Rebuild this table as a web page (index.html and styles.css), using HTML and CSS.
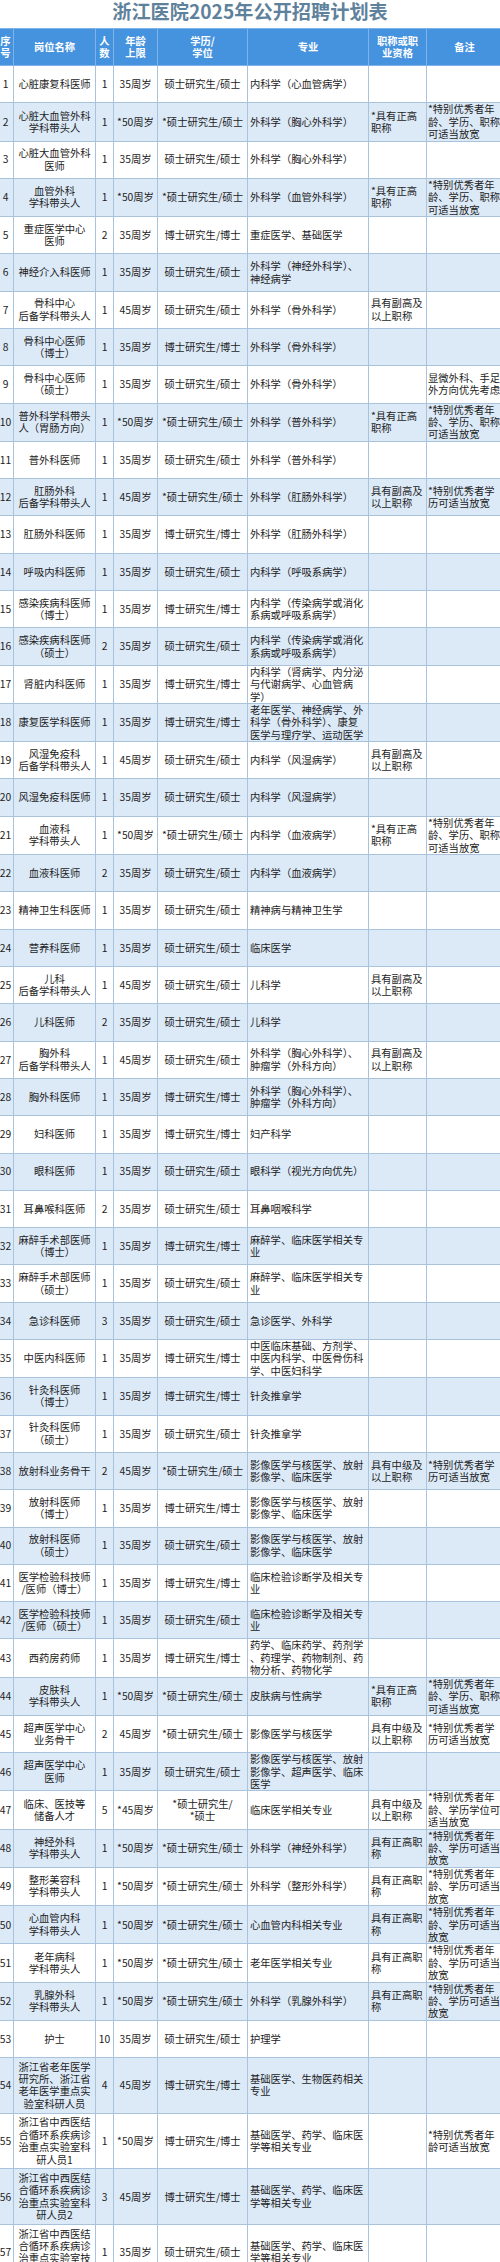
FILE: index.html
```html
<!DOCTYPE html>
<html lang="zh-CN">
<head>
<meta charset="utf-8">
<title>浙江医院2025年公开招聘计划表</title>
<link rel="stylesheet" href="styles.css">
</head>
<body>
<div class="page">
  <h1 class="title">浙江医院2025年公开招聘计划表</h1>
  <div class="wrap">
    <table class="plan">
      <colgroup>
        <col class="c-no"><col class="c-name"><col class="c-num"><col class="c-age"><col class="c-edu"><col class="c-major"><col class="c-title"><col class="c-note">
      </colgroup>
      <thead>
        <tr>
          <th>序<br>号</th><th>岗位名称</th><th>人<br>数</th><th>年龄<br>上限</th><th>学历/<br>学位</th><th>专业</th><th>职称或职<br>业资格</th><th>备注</th>
        </tr>
      </thead>
      <tbody>
        <tr><td>1</td><td>心脏康复科医师</td><td>1</td><td>35周岁</td><td>硕士研究生/硕士</td><td class="l">内科学（心血管病学）</td><td class="l"></td><td class="n"></td></tr>
        <tr><td>2</td><td>心脏大血管外科<br>学科带头人</td><td>1</td><td>*50周岁</td><td>*硕士研究生/硕士</td><td class="l">外科学（胸心外科学）</td><td class="l">*具有正高<br>职称</td><td class="n">*特别优秀者年<br>龄、学历、职称<br>可适当放宽</td></tr>
        <tr><td>3</td><td>心脏大血管外科<br>医师</td><td>1</td><td>35周岁</td><td>硕士研究生/硕士</td><td class="l">外科学（胸心外科学）</td><td class="l"></td><td class="n"></td></tr>
        <tr><td>4</td><td>血管外科<br>学科带头人</td><td>1</td><td>*50周岁</td><td>*硕士研究生/硕士</td><td class="l">外科学（血管外科学）</td><td class="l">*具有正高<br>职称</td><td class="n">*特别优秀者年<br>龄、学历、职称<br>可适当放宽</td></tr>
        <tr><td>5</td><td>重症医学中心<br>医师</td><td>2</td><td>35周岁</td><td>博士研究生/博士</td><td class="l">重症医学、基础医学</td><td class="l"></td><td class="n"></td></tr>
        <tr><td>6</td><td>神经介入科医师</td><td>1</td><td>35周岁</td><td>硕士研究生/硕士</td><td class="l">外科学（神经外科学）、<br>神经病学</td><td class="l"></td><td class="n"></td></tr>
        <tr><td>7</td><td>骨科中心<br>后备学科带头人</td><td>1</td><td>45周岁</td><td>硕士研究生/硕士</td><td class="l">外科学（骨外科学）</td><td class="l">具有副高及<br>以上职称</td><td class="n"></td></tr>
        <tr><td>8</td><td>骨科中心医师<br>（博士）</td><td>1</td><td>35周岁</td><td>博士研究生/博士</td><td class="l">外科学（骨外科学）</td><td class="l"></td><td class="n"></td></tr>
        <tr><td>9</td><td>骨科中心医师<br>（硕士）</td><td>1</td><td>35周岁</td><td>硕士研究生/硕士</td><td class="l">外科学（骨外科学）</td><td class="l"></td><td class="n">显微外科、手足<br>外方向优先考虑</td></tr>
        <tr><td>10</td><td>普外科学科带头<br>人（胃肠方向）</td><td>1</td><td>*50周岁</td><td>*硕士研究生/硕士</td><td class="l">外科学（普外科学）</td><td class="l">*具有正高<br>职称</td><td class="n">*特别优秀者年<br>龄、学历、职称<br>可适当放宽</td></tr>
        <tr><td>11</td><td>普外科医师</td><td>1</td><td>35周岁</td><td>硕士研究生/硕士</td><td class="l">外科学（普外科学）</td><td class="l"></td><td class="n"></td></tr>
        <tr><td>12</td><td>肛肠外科<br>后备学科带头人</td><td>1</td><td>45周岁</td><td>*硕士研究生/硕士</td><td class="l">外科学（肛肠外科学）</td><td class="l">具有副高及<br>以上职称</td><td class="n">*特别优秀者学<br>历可适当放宽</td></tr>
        <tr><td>13</td><td>肛肠外科医师</td><td>1</td><td>35周岁</td><td>博士研究生/博士</td><td class="l">外科学（肛肠外科学）</td><td class="l"></td><td class="n"></td></tr>
        <tr><td>14</td><td>呼吸内科医师</td><td>1</td><td>35周岁</td><td>硕士研究生/硕士</td><td class="l">内科学（呼吸系病学）</td><td class="l"></td><td class="n"></td></tr>
        <tr><td>15</td><td>感染疾病科医师<br>（博士）</td><td>1</td><td>35周岁</td><td>博士研究生/博士</td><td class="l">内科学（传染病学或消化<br>系病或呼吸系病学）</td><td class="l"></td><td class="n"></td></tr>
        <tr><td>16</td><td>感染疾病科医师<br>（硕士）</td><td>2</td><td>35周岁</td><td>硕士研究生/硕士</td><td class="l">内科学（传染病学或消化<br>系病或呼吸系病学）</td><td class="l"></td><td class="n"></td></tr>
        <tr><td>17</td><td>肾脏内科医师</td><td>1</td><td>35周岁</td><td>博士研究生/博士</td><td class="l">内科学（肾病学、内分泌<br>与代谢病学、心血管病<br>学）</td><td class="l"></td><td class="n"></td></tr>
        <tr><td>18</td><td>康复医学科医师</td><td>1</td><td>35周岁</td><td>博士研究生/博士</td><td class="l">老年医学、神经病学、外<br>科学（骨外科学）、康复<br>医学与理疗学、运动医学</td><td class="l"></td><td class="n"></td></tr>
        <tr><td>19</td><td>风湿免疫科<br>后备学科带头人</td><td>1</td><td>45周岁</td><td>硕士研究生/硕士</td><td class="l">内科学（风湿病学）</td><td class="l">具有副高及<br>以上职称</td><td class="n"></td></tr>
        <tr><td>20</td><td>风湿免疫科医师</td><td>1</td><td>35周岁</td><td>硕士研究生/硕士</td><td class="l">内科学（风湿病学）</td><td class="l"></td><td class="n"></td></tr>
        <tr><td>21</td><td>血液科<br>学科带头人</td><td>1</td><td>*50周岁</td><td>*硕士研究生/硕士</td><td class="l">内科学（血液病学）</td><td class="l">*具有正高<br>职称</td><td class="n">*特别优秀者年<br>龄、学历、职称<br>可适当放宽</td></tr>
        <tr><td>22</td><td>血液科医师</td><td>2</td><td>35周岁</td><td>硕士研究生/硕士</td><td class="l">内科学（血液病学）</td><td class="l"></td><td class="n"></td></tr>
        <tr><td>23</td><td>精神卫生科医师</td><td>1</td><td>35周岁</td><td>硕士研究生/硕士</td><td class="l">精神病与精神卫生学</td><td class="l"></td><td class="n"></td></tr>
        <tr><td>24</td><td>营养科医师</td><td>1</td><td>35周岁</td><td>硕士研究生/硕士</td><td class="l">临床医学</td><td class="l"></td><td class="n"></td></tr>
        <tr><td>25</td><td>儿科<br>后备学科带头人</td><td>1</td><td>45周岁</td><td>硕士研究生/硕士</td><td class="l">儿科学</td><td class="l">具有副高及<br>以上职称</td><td class="n"></td></tr>
        <tr><td>26</td><td>儿科医师</td><td>2</td><td>35周岁</td><td>硕士研究生/硕士</td><td class="l">儿科学</td><td class="l"></td><td class="n"></td></tr>
        <tr><td>27</td><td>胸外科<br>后备学科带头人</td><td>1</td><td>45周岁</td><td>硕士研究生/硕士</td><td class="l">外科学（胸心外科学）、<br>肿瘤学（外科方向）</td><td class="l">具有副高及<br>以上职称</td><td class="n"></td></tr>
        <tr><td>28</td><td>胸外科医师</td><td>1</td><td>35周岁</td><td>博士研究生/博士</td><td class="l">外科学（胸心外科学）、<br>肿瘤学（外科方向）</td><td class="l"></td><td class="n"></td></tr>
        <tr><td>29</td><td>妇科医师</td><td>1</td><td>35周岁</td><td>博士研究生/博士</td><td class="l">妇产科学</td><td class="l"></td><td class="n"></td></tr>
        <tr><td>30</td><td>眼科医师</td><td>1</td><td>35周岁</td><td>硕士研究生/硕士</td><td class="l">眼科学（视光方向优先）</td><td class="l"></td><td class="n"></td></tr>
        <tr><td>31</td><td>耳鼻喉科医师</td><td>2</td><td>35周岁</td><td>硕士研究生/硕士</td><td class="l">耳鼻咽喉科学</td><td class="l"></td><td class="n"></td></tr>
        <tr><td>32</td><td>麻醉手术部医师<br>（博士）</td><td>1</td><td>35周岁</td><td>博士研究生/博士</td><td class="l">麻醉学、临床医学相关专<br>业</td><td class="l"></td><td class="n"></td></tr>
        <tr><td>33</td><td>麻醉手术部医师<br>（硕士）</td><td>1</td><td>35周岁</td><td>硕士研究生/硕士</td><td class="l">麻醉学、临床医学相关专<br>业</td><td class="l"></td><td class="n"></td></tr>
        <tr><td>34</td><td>急诊科医师</td><td>3</td><td>35周岁</td><td>硕士研究生/硕士</td><td class="l">急诊医学、外科学</td><td class="l"></td><td class="n"></td></tr>
        <tr><td>35</td><td>中医内科医师</td><td>1</td><td>35周岁</td><td>博士研究生/博士</td><td class="l">中医临床基础、方剂学、<br>中医内科学、中医骨伤科<br>学、中医妇科学</td><td class="l"></td><td class="n"></td></tr>
        <tr><td>36</td><td>针灸科医师<br>（博士）</td><td>1</td><td>35周岁</td><td>博士研究生/博士</td><td class="l">针灸推拿学</td><td class="l"></td><td class="n"></td></tr>
        <tr><td>37</td><td>针灸科医师<br>（硕士）</td><td>1</td><td>35周岁</td><td>硕士研究生/硕士</td><td class="l">针灸推拿学</td><td class="l"></td><td class="n"></td></tr>
        <tr><td>38</td><td>放射科业务骨干</td><td>2</td><td>45周岁</td><td>*硕士研究生/硕士</td><td class="l">影像医学与核医学、放射<br>影像学、临床医学</td><td class="l">具有中级及<br>以上职称</td><td class="n">*特别优秀者学<br>历可适当放宽</td></tr>
        <tr><td>39</td><td>放射科医师<br>（博士）</td><td>1</td><td>35周岁</td><td>博士研究生/博士</td><td class="l">影像医学与核医学、放射<br>影像学、临床医学</td><td class="l"></td><td class="n"></td></tr>
        <tr><td>40</td><td>放射科医师<br>（硕士）</td><td>1</td><td>35周岁</td><td>硕士研究生/硕士</td><td class="l">影像医学与核医学、放射<br>影像学、临床医学</td><td class="l"></td><td class="n"></td></tr>
        <tr><td>41</td><td>医学检验科技师<br>/医师（博士）</td><td>1</td><td>35周岁</td><td>博士研究生/博士</td><td class="l">临床检验诊断学及相关专<br>业</td><td class="l"></td><td class="n"></td></tr>
        <tr><td>42</td><td>医学检验科技师<br>/医师（硕士）</td><td>1</td><td>35周岁</td><td>硕士研究生/硕士</td><td class="l">临床检验诊断学及相关专<br>业</td><td class="l"></td><td class="n"></td></tr>
        <tr><td>43</td><td>西药房药师</td><td>1</td><td>35周岁</td><td>博士研究生/博士</td><td class="l">药学、临床药学、药剂学<br>、药理学、药物制剂、药<br>物分析、药物化学</td><td class="l"></td><td class="n"></td></tr>
        <tr><td>44</td><td>皮肤科<br>学科带头人</td><td>1</td><td>*50周岁</td><td>*硕士研究生/硕士</td><td class="l">皮肤病与性病学</td><td class="l">*具有正高<br>职称</td><td class="n">*特别优秀者年<br>龄、学历、职称<br>可适当放宽</td></tr>
        <tr><td>45</td><td>超声医学中心<br>业务骨干</td><td>2</td><td>45周岁</td><td>*硕士研究生/硕士</td><td class="l">影像医学与核医学</td><td class="l">具有中级及<br>以上职称</td><td class="n">*特别优秀者学<br>历可适当放宽</td></tr>
        <tr><td>46</td><td>超声医学中心<br>医师</td><td>1</td><td>35周岁</td><td>硕士研究生/硕士</td><td class="l">影像医学与核医学、放射<br>影像学、超声医学、临床<br>医学</td><td class="l"></td><td class="n"></td></tr>
        <tr><td>47</td><td>临床、医技等<br>储备人才</td><td>5</td><td>*45周岁</td><td>*硕士研究生/<br>*硕士</td><td class="l">临床医学相关专业</td><td class="l">具有中级及<br>以上职称</td><td class="n">*特别优秀者年<br>龄、学历学位可<br>适当放宽</td></tr>
        <tr><td>48</td><td>神经外科<br>学科带头人</td><td>1</td><td>*50周岁</td><td>*硕士研究生/硕士</td><td class="l">外科学（神经外科学）</td><td class="l">具有正高职<br>称</td><td class="n">*特别优秀者年<br>龄、学历可适当<br>放宽</td></tr>
        <tr><td>49</td><td>整形美容科<br>学科带头人</td><td>1</td><td>*50周岁</td><td>*硕士研究生/硕士</td><td class="l">外科学（整形外科学）</td><td class="l">具有正高职<br>称</td><td class="n">*特别优秀者年<br>龄、学历可适当<br>放宽</td></tr>
        <tr><td>50</td><td>心血管内科<br>学科带头人</td><td>1</td><td>*50周岁</td><td>*硕士研究生/硕士</td><td class="l">心血管内科相关专业</td><td class="l">具有正高职<br>称</td><td class="n">*特别优秀者年<br>龄、学历可适当<br>放宽</td></tr>
        <tr><td>51</td><td>老年病科<br>学科带头人</td><td>1</td><td>*50周岁</td><td>*硕士研究生/硕士</td><td class="l">老年医学相关专业</td><td class="l">具有正高职<br>称</td><td class="n">*特别优秀者年<br>龄、学历可适当<br>放宽</td></tr>
        <tr><td>52</td><td>乳腺外科<br>学科带头人</td><td>1</td><td>*50周岁</td><td>*硕士研究生/硕士</td><td class="l">外科学（乳腺外科学）</td><td class="l">具有正高职<br>称</td><td class="n">*特别优秀者年<br>龄、学历可适当<br>放宽</td></tr>
        <tr><td>53</td><td>护士</td><td>10</td><td>35周岁</td><td>硕士研究生/硕士</td><td class="l">护理学</td><td class="l"></td><td class="n"></td></tr>
        <tr class="tall"><td>54</td><td>浙江省老年医学<br>研究所、浙江省<br>老年医学重点实<br>验室科研人员</td><td>4</td><td>45周岁</td><td>博士研究生/博士</td><td class="l">基础医学、生物医药相关<br>专业</td><td class="l"></td><td class="n"></td></tr>
        <tr class="tall"><td>55</td><td>浙江省中西医结<br>合循环系疾病诊<br>治重点实验室科<br>研人员1</td><td>1</td><td>*50周岁</td><td>博士研究生/博士</td><td class="l">基础医学、药学、临床医<br>学等相关专业</td><td class="l"></td><td class="n">*特别优秀者年<br>龄可适当放宽</td></tr>
        <tr class="tall"><td>56</td><td>浙江省中西医结<br>合循环系疾病诊<br>治重点实验室科<br>研人员2</td><td>3</td><td>45周岁</td><td>博士研究生/博士</td><td class="l">基础医学、药学、临床医<br>学等相关专业</td><td class="l"></td><td class="n"></td></tr>
        <tr class="tall"><td>57</td><td>浙江省中西医结<br>合循环系疾病诊<br>治重点实验室技<br>师</td><td>1</td><td>35周岁</td><td>硕士研究生/硕士</td><td class="l">基础医学、药学、临床医<br>学等相关专业</td><td class="l"></td><td class="n"></td></tr>
      </tbody>
    </table>
  </div>
</div>
</body>
</html>
```
FILE: styles.css
```css
html, body {
  margin: 0;
  padding: 0;
  background: #ffffff;
}

.page {
  width: 500px;
  overflow: hidden;
  font-family: "Noto Sans CJK SC", "Noto Sans", sans-serif;
  color: #1c1c1c;
}

.title {
  margin: 0;
  height: 28px;
  line-height: 22px;
  text-align: center;
  font-size: 19.2px;
  font-weight: 700;
  color: #5f829c;
}

.wrap {
  width: 500px;
  overflow: hidden;
}

.plan {
  margin-left: -3px;
  width: 505px;
  table-layout: fixed;
  border-collapse: collapse;
  font-size: 10.3px;
  line-height: 12.4px;
}

.c-no { width: 16px; }
.c-name { width: 82px; }
.c-num { width: 18px; }
.c-age { width: 44px; }
.c-edu { width: 90px; }
.c-major { width: 121px; }
.c-title { width: 58px; }
.c-note { width: 76px; }

.plan th,
.plan td {
  padding: 0 1px;
  text-align: center;
  vertical-align: middle;
  white-space: nowrap;
  border: 1px solid #a9c3dd;
}

.plan thead tr {
  height: 37px;
}

.plan th {
  background: #4592de;
  color: #ffffff;
  font-weight: 700;
  line-height: 11.7px;
  border-color: #7fb2e8;
}

.plan tbody tr {
  height: 37.32px;
  background: #ffffff;
}

.plan tbody tr:nth-child(even) {
  background: #dceaf8;
}

.plan tbody tr.tall {
  height: 55.7px;
}

.plan td.l {
  text-align: left;
  padding-left: 2px;
}

.plan td.n {
  text-align: left;
  padding-left: 1px;
  padding-right: 0;
}
```
